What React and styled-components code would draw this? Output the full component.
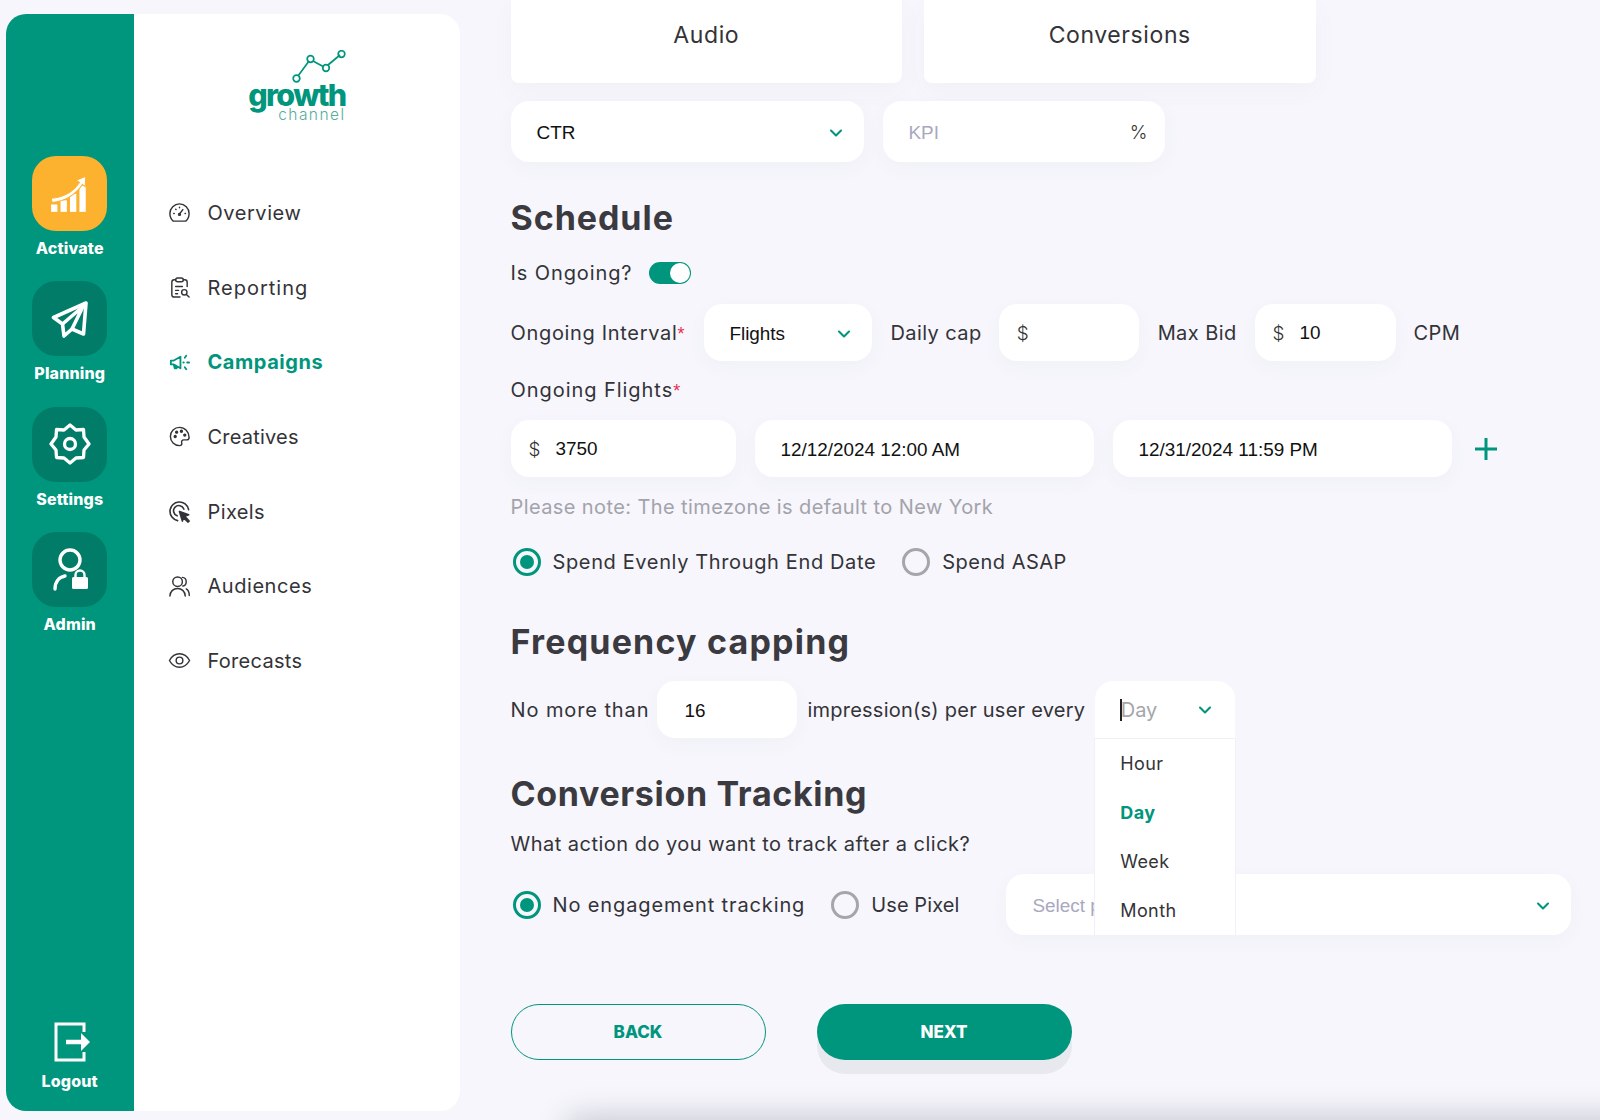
import React from "react";
import styled, { createGlobalStyle } from "styled-components";

const Global = createGlobalStyle`
  html, body { margin: 0; padding: 0; background: #f6f6fc; }
  body { font-family: Inter, "Open Sans", sans-serif; color: #333338; }
  * { box-sizing: border-box; }
`;

const GREEN = "#00957d";

const Page = styled.div`
  position: relative; width: 1600px; height: 1120px; overflow: hidden;
  display: flex; background: #f6f6fc;
`;
const Sidebar = styled.aside`
  margin: 14px 0 9px 6px; width: 454px; display: flex; flex: none;
  border-radius: 20px; overflow: hidden; background: #fff;
`;
const Rail = styled.nav`
  width: 127.5px; background: ${GREEN}; display: flex; flex-direction: column; align-items: center;
  padding-top: 142px; padding-bottom: 20px; flex: none;
`;
const RailItem = styled.div`
  display: flex; flex-direction: column; align-items: center; height: 125.3px; color: #fff;
`;
const Tile = styled.div`
  width: 75px; height: 75px; border-radius: 24px; display: flex; align-items: center; justify-content: center;
  background: ${p => (p.$active ? "#fdb22f" : "#007c69")};
`;
const RailLabel = styled.span`
  font-size: 16px; font-weight: 800; margin-top: 7px; line-height: 20px; letter-spacing: .15px;
`;
const Logout = styled.div`
  margin-top: auto; display: flex; flex-direction: column; align-items: center; color: #fff;
  svg { margin: 0 0 2px 7px; }
`;
const Panel = styled.div`
  flex: 1; padding-left: 34px; display: flex; flex-direction: column;
`;
const Logo = styled.div`
  width: 118px; margin: 36px 0 0 60px; height: 80px; position: relative; color: ${GREEN};
  display: flex; flex-direction: column; align-items: flex-end;
`;
const LogoGrowth = styled.span`
  font-size: 30.5px; font-weight: 800; letter-spacing: -1.7px; line-height: 24px; margin-top: -1px;
`;
const LogoChannel = styled.span`
  font-size: 15.5px; font-weight: 300; letter-spacing: 1.45px; line-height: 14px; margin-top: 1px; color: #55ad9c;
`;
const NavList = styled.div` display: flex; flex-direction: column; margin-top: 45.5px; `;
const NavItem = styled.div`
  height: 74.7px; display: flex; align-items: center; gap: 17px; font-size: 20px;
  letter-spacing: ${p => p.$ls ?? 0.55}px;
  font-weight: ${p => (p.$active ? 700 : 400)}; color: ${p => (p.$active ? GREEN : "#333338")};
  svg { width: 23px; height: 23px; flex: none; }
`;

const Main = styled.main`
  flex: 1; padding-left: 50.5px; display: flex; flex-direction: column; align-items: flex-start;
`;
const CardRow = styled.div` display: flex; gap: 22px; `;
const Card = styled.div`
  width: 391.5px; height: 83px; background: #fff; border-radius: 0 0 8px 8px;
  display: flex; align-items: center; justify-content: center; font-size: 23px; letter-spacing: .6px;
  padding-bottom: 14px; box-shadow: 0 8px 24px rgba(90,90,140,.04);
`;
const Row = styled.div`
  display: flex; align-items: center; margin-top: ${p => p.$mt}px; height: ${p => p.$h}px;
  gap: ${p => p.$gap || 0}px;
`;
const Field = styled.div`
  position: relative; width: ${p => p.$w}px; height: 100%; background: #fff; border-radius: 18px;
  box-shadow: 0 6px 20px rgba(90,90,140,.035); flex: none; display: flex; align-items: center;
  justify-content: space-between; padding: 2px ${p => p.$pr ?? 26}px 0 ${p => p.$pl ?? 26}px;
  margin-left: ${p => p.$ml || 0}px;
  font-family: "Liberation Sans", Arial, sans-serif; font-size: 18.9px; color: ${p => p.$muted ? "#a9a8c0" : "#111"};
`;
const Currency = styled.span` display: flex; gap: 15px; `;
const Dollar = styled.span` color: #333; font-family: Inter, sans-serif; font-weight: 300; `;
const Heading = styled.h2`
  margin: ${p => p.$mt}px 0 0; font-size: 34px; line-height: 40px; font-weight: 700; color: #3a3a40;
  letter-spacing: ${p => p.$ls}px;
`;
const Label = styled.span`
  display: block; font-size: 20px; line-height: 24px; letter-spacing: ${p => p.$ls ?? 0.42}px; color: #333338; flex: none;
  margin-right: ${p => p.$mr || 0}px; margin-left: ${p => p.$ml || 0}px;
`;
const Star = styled.span` color: #e8304a; font-family: "Liberation Sans", sans-serif; font-size: 18px; letter-spacing: 0; line-height: 0; `;
const Block = styled.div` margin-top: ${p => p.$mt}px; `;
const Note = styled.div`
  margin-top: 18px; font-size: 20px; line-height: 24px; color: #a3a3ab; letter-spacing: .4px;
`;
const Toggle = styled.span`
  width: 42px; height: 22px; border-radius: 11px; background: ${GREEN}; position: relative; display: block; margin-left: 17px;
  &::after { content: ""; position: absolute; right: 1px; top: 1px; width: 20px; height: 20px; border-radius: 50%; background: #fff; }
`;
const RadioWrap = styled.span`
  display: inline-flex; align-items: center; gap: 12px; margin-left: ${p => p.$ml || 2}px;
`;
const RadioDot = styled.span`
  width: 28px; height: 28px; border-radius: 50%; position: relative; flex: none;
  border: 3px solid ${p => (p.$on ? GREEN : "#a5a5ab")};
  &::after {
    content: ""; position: absolute; inset: 4px; border-radius: 50%; background: ${GREEN};
    display: ${p => (p.$on ? "block" : "none")};
  }
`;
const DayWrap = styled.div` position: relative; width: 140px; height: 100%; flex: none; margin-left: 10px; `;
const DayField = styled.div`
  position: relative; z-index: 3; height: 58px; background: #fff; border-radius: 18px 18px 0 0; display: flex;
  align-items: center; justify-content: space-between; padding: 0 23px 0 25px;
  border-bottom: 1.5px solid #eef0f6; font-size: 20px; color: #a5a5ab;
`;
const Caret = styled.span` display: inline-block; width: 1.5px; height: 22px; background: #222; margin-right: -1px; `;
const DayText = styled.span` display: flex; align-items: center; `;
const Menu = styled.div`
  position: absolute; z-index: 2; left: -1px; right: -1px; top: 58px; height: 196px; background: #fff;
  border: 1px solid #f0f1f8; border-top: 0; border-bottom: 0; padding: 0 0 0 25px;
  display: flex; flex-direction: column; overflow: hidden;
`;
const MenuItem = styled.div`
  height: 49px; flex: none; display: flex; align-items: center; font-size: 18px; letter-spacing: .4px;
  font-weight: ${p => (p.$active ? 700 : 400)}; color: ${p => (p.$active ? GREEN : "#333338")};
`;
const Plus = styled.span` margin-left: 21px; display: flex; `;
const BtnRow = styled.div` display: flex; gap: 51px; margin-top: 69px; `;
const Button = styled.div`
  width: 255px; height: 56px; border-radius: 28px; display: flex; align-items: center; justify-content: center;
  font-size: 17px; font-weight: 800; color: ${p => (p.$fill ? "#fff" : GREEN)};
  background: ${p => (p.$fill ? GREEN : "transparent")};
  border: ${p => (p.$fill ? "0" : `1px solid ${GREEN}`)};
  box-shadow: ${p => (p.$fill ? "0 14px 0 #e8e8ef" : "none")};
`;
const BottomShade = styled.div`
  position: absolute; left: 565px; right: -60px; bottom: -36px; height: 36px; border-radius: 40px;
  box-shadow: 0 -3px 30px rgba(60,60,80,.26);
`;

const Chevron = () => (
  <svg width="14" height="10" viewBox="0 0 14 10" fill="none" stroke={GREEN} strokeWidth="2.1" strokeLinecap="round" strokeLinejoin="round">
    <path d="M2 2.5 7 7.5 12 2.5" />
  </svg>
);

const ic = { viewBox: "0 0 24 24", fill: "none", stroke: "currentColor", strokeWidth: 1.5, strokeLinecap: "round", strokeLinejoin: "round" };
const I = {
  overview: <svg {...ic}><path d="M5.500 21C3.300 19.200 2 16.500 2 13 2 7.500 6.500 3 12 3s10 4.500 10 10c0 3.500-1.300 6.200-3.500 8z" /><path d="m12 13.500 3.500-4.500M6 13h.5M8 8.500l.4.4M12 6.500v.6M17.800 13h.4" /><circle cx="12" cy="14" r="1" /></svg>,
  reporting: <svg {...ic}><path d="M8 4H6.500C5 4 4 5 4 6.500v13C4 21 5 22 6.500 22h6M16 4h1.500C19 4 20 5 20 6.500V11" /><rect x="8" y="2" width="8" height="4" rx="2" /><path d="M8 11h7M8 15h3M8 18.500h2" /><circle cx="17" cy="17" r="2.800" /><path d="m19.200 19.200 2.800 2.800" /></svg>,
  campaigns: <svg {...ic} strokeWidth="1.9"><path d="M3 10v4h3l7 4V6l-7 4H3zM6 14l1 4h2l-.8-3" /><path d="M16 12h.5M20 12h2M17.500 7l1.500-2M17.500 17l1.500 2" /></svg>,
  creatives: <svg {...ic}><path d="M12 2.500a9.500 9.500 0 1 0 0 19c2 0 2.800-1.400 2.300-2.800-.5-1.500.2-3.200 2.200-3.200h3.200c1.300 0 2.300-1 2.300-2.500 0-5.800-4.500-10.500-10-10.500z" /><circle cx="7.500" cy="12" r="1" fill="currentColor" /><circle cx="9" cy="7.500" r="1" fill="currentColor" /><circle cx="14" cy="6.500" r="1" fill="currentColor" /><circle cx="17.500" cy="10.500" r="1" fill="currentColor" /></svg>,
  pixels: <svg {...ic} strokeWidth="1.7"><path d="M10 21.500A9.800 9.800 0 1 1 21.500 10" /><path d="M9.500 16.500a5.500 5.500 0 1 1 7-7" /><path d="M12 12l9.500 3.500-4 1.500 4.500 5-1 1-5-4.500-1 3.500z" fill="currentColor" /></svg>,
  audiences: <svg {...ic}><circle cx="10" cy="7" r="5" /><path d="M2 22c0-4.500 3.500-8 8-8s8 3.500 8 8" /><path d="M15 2.500c2.500.3 4 2.200 4 4.500s-1.500 4.200-3.500 4.500M19 14.500c2 1 3.200 3.500 3.200 7" /></svg>,
  forecasts: <svg {...ic}><path d="M1.500 12C4 7.500 7.500 5 12 5s8 2.500 10.500 7c-2.500 4.500-6 7-10.500 7S4 16.500 1.500 12z" /><circle cx="12" cy="12" r="3.500" /></svg>,
};

const nav = [
  { t: "Overview", icon: I.overview },
  { t: "Reporting", icon: I.reporting, ls: 1 },
  { t: "Campaigns", icon: I.campaigns, active: true },
  { t: "Creatives", icon: I.creatives, ls: 0.2 },
  { t: "Pixels", icon: I.pixels, ls: 0.4 },
  { t: "Audiences", icon: I.audiences },
  { t: "Forecasts", icon: I.forecasts, ls: 0.3 },
];

const ActivateIcon = () => (
  <svg width="42" height="42" viewBox="0 0 40 40" fill="#fff">
    <rect x="2" y="30" width="6" height="7" /><rect x="11" y="26" width="6" height="11" /><rect x="20" y="20" width="6" height="17" /><rect x="29" y="12" width="6" height="25" />
    <path d="M2 24c12-1 21-6 27-15l-3-2 9-4-.5 10-2.700-2C25 21 15 27 3 28z" stroke="#fdb22f" strokeWidth="1" />
  </svg>
);
const PlaneIcon = () => (
  <svg width="38" height="38" viewBox="0 0 38 38" fill="none" stroke="#fff" strokeWidth="3.600" strokeLinejoin="round">
    <path d="M2.500 17.500 35 3l-2.500 31-11.500-5-8 7-1.500-12z" /><path d="M11.500 24 32 6.500 21 29" />
  </svg>
);
const GearIcon = () => (
  <svg width="42" height="42" viewBox="0 0 42 42" fill="none" stroke="#fff" strokeWidth="3.300" strokeLinejoin="round">
    <path d="M21 2l6 5 7.500-.5.500 7.500 5 7-5 6-.5 7.500-7.500.5-6 5-6-5-7.500-.5-.5-7.500-5-6 5-7 .5-7.500 7.500.5z" /><circle cx="21" cy="21" r="5.500" />
  </svg>
);
const AdminIcon = () => (
  <svg width="36" height="44" viewBox="0 0 36 44" fill="none">
    <circle cx="18" cy="13" r="10" stroke="#fff" strokeWidth="3.400" />
    <path d="M3 42c0-7 4-12 10-13" stroke="#fff" strokeWidth="3.400" strokeLinecap="round" />
    <rect x="20" y="30" width="16" height="12" rx="1.500" fill="#fff" />
    <path d="M23.500 31v-3a4.500 4.500 0 0 1 9 0v3" stroke="#fff" strokeWidth="2.400" />
  </svg>
);
const LogoutIcon = () => (
  <svg width="38" height="40" viewBox="0 0 38 40" fill="none" stroke="#fff" strokeWidth="3">
    <path d="M30 10V2H2v36h28v-8" /><path d="M12 20h16" strokeWidth="4.500" /><path d="M27 11l9 9-9 9z" fill="#fff" stroke="none" />
  </svg>
);
const LogoGraph = () => (
  <svg width="54" height="34" viewBox="0 0 54 34" fill="none" stroke={GREEN} strokeWidth="1.700">
    <path d="M6 26 17 11M21 11l11 6M36 15l12-10" />
    <circle cx="4.500" cy="28.500" r="3.300" /><circle cx="18.500" cy="9" r="3.300" /><circle cx="34" cy="18" r="3.300" /><circle cx="49.500" cy="4" r="3.300" />
  </svg>
);
const PlusIcon = () => (
  <svg width="26" height="26" viewBox="0 0 26 26" stroke={GREEN} strokeWidth="3"><path d="M13 2v22M2 13h22" /></svg>
);

export default function App() {
  return (
    <Page>
      <Global />
      <Sidebar>
        <Rail>
          <RailItem><Tile $active><ActivateIcon /></Tile><RailLabel>Activate</RailLabel></RailItem>
          <RailItem><Tile><PlaneIcon /></Tile><RailLabel>Planning</RailLabel></RailItem>
          <RailItem><Tile><GearIcon /></Tile><RailLabel>Settings</RailLabel></RailItem>
          <RailItem><Tile><AdminIcon /></Tile><RailLabel>Admin</RailLabel></RailItem>
          <Logout><LogoutIcon /><RailLabel>Logout</RailLabel></Logout>
        </Rail>
        <Panel>
          <Logo>
            <LogoGraph />
            <LogoGrowth>growth</LogoGrowth>
            <LogoChannel>channel</LogoChannel>
          </Logo>
          <NavList>
            {nav.map(n => <NavItem key={n.t} $active={n.active} $ls={n.ls}>{n.icon}{n.t}</NavItem>)}
          </NavList>
        </Panel>
      </Sidebar>
      <Main>
        <CardRow><Card>Audio</Card><Card>Conversions</Card></CardRow>
        <Row $mt={18} $h={61} $gap={19}>
          <Field $w={353} $pr={21}>CTR<Chevron /></Field>
          <Field $w={282} $muted $pr={17}>KPI<Dollar>%</Dollar></Field>
        </Row>
        <Heading $mt={36} $ls={0.95}>Schedule</Heading>
        <Row $mt={23} $h={24}><Label $ls={0.9}>Is Ongoing?</Label><Toggle /></Row>
        <Row $mt={19} $h={57}>
          <Label $mr={20} $ls={0.67}>Ongoing Interval<Star>*</Star></Label>
          <Field $w={168} $pl={25} $pr={21}>Flights<Chevron /></Field>
          <Label $ml={18} $mr={17}>Daily cap</Label>
          <Field $w={140} $pl={18}><Dollar>$</Dollar></Field>
          <Label $ml={19} $mr={18}>Max Bid</Label>
          <Field $w={141} $pl={18}><Currency><Dollar>$</Dollar>10</Currency></Field>
          <Label $ml={18}>CPM</Label>
        </Row>
        <Block $mt={17}><Label $ls={0.95}>Ongoing Flights<Star>*</Star></Label></Block>
        <Row $mt={18} $h={57}>
          <Field $w={225} $pl={18}><Currency><Dollar>$</Dollar>3750</Currency></Field>
          <Field $w={339} $pl={26} $ml={19}>12/12/2024 12:00 AM</Field>
          <Field $w={339} $pl={26} $ml={19}>12/31/2024 11:59 PM</Field>
          <Plus><PlusIcon /></Plus>
        </Row>
        <Note>Please note: The timezone is default to New York</Note>
        <Row $mt={29} $h={28}>
          <RadioWrap><RadioDot $on /><Label $ls={0.63}>Spend Evenly Through End Date</Label></RadioWrap>
          <RadioWrap $ml={26}><RadioDot /><Label $ls={0.5}>Spend ASAP</Label></RadioWrap>
        </Row>
        <Heading $mt={46} $ls={1.2}>Frequency capping</Heading>
        <Row $mt={19} $h={57}>
          <Label $mr={8} $ls={0.9}>No more than</Label>
          <Field $w={140} $pl={27}>16</Field>
          <Label $ml={10} $ls={0.24}>impression(s) per user every</Label>
          <DayWrap>
            <DayField><DayText><Caret />Day</DayText><Chevron /></DayField>
            <Menu>
              <MenuItem>Hour</MenuItem>
              <MenuItem $active>Day</MenuItem>
              <MenuItem>Week</MenuItem>
              <MenuItem>Month</MenuItem>
            </Menu>
          </DayWrap>
        </Row>
        <Heading $mt={36} $ls={0.65}>Conversion Tracking</Heading>
        <Block $mt={18}><Label $ls={0.48}>What action do you want to track after a click?</Label></Block>
        <Row $mt={18} $h={61}>
          <RadioWrap><RadioDot $on /><Label $ls={0.88}>No engagement tracking</Label></RadioWrap>
          <RadioWrap $ml={26}><RadioDot /><Label $ls={0.1}>Use Pixel</Label></RadioWrap>
          <Field $w={565} $muted $pr={21} $ml={47}>Select pixel<Chevron /></Field>
        </Row>
        <BtnRow>
          <Button>BACK</Button>
          <Button $fill>NEXT</Button>
        </BtnRow>
      </Main>
      <BottomShade />
    </Page>
  );
}
